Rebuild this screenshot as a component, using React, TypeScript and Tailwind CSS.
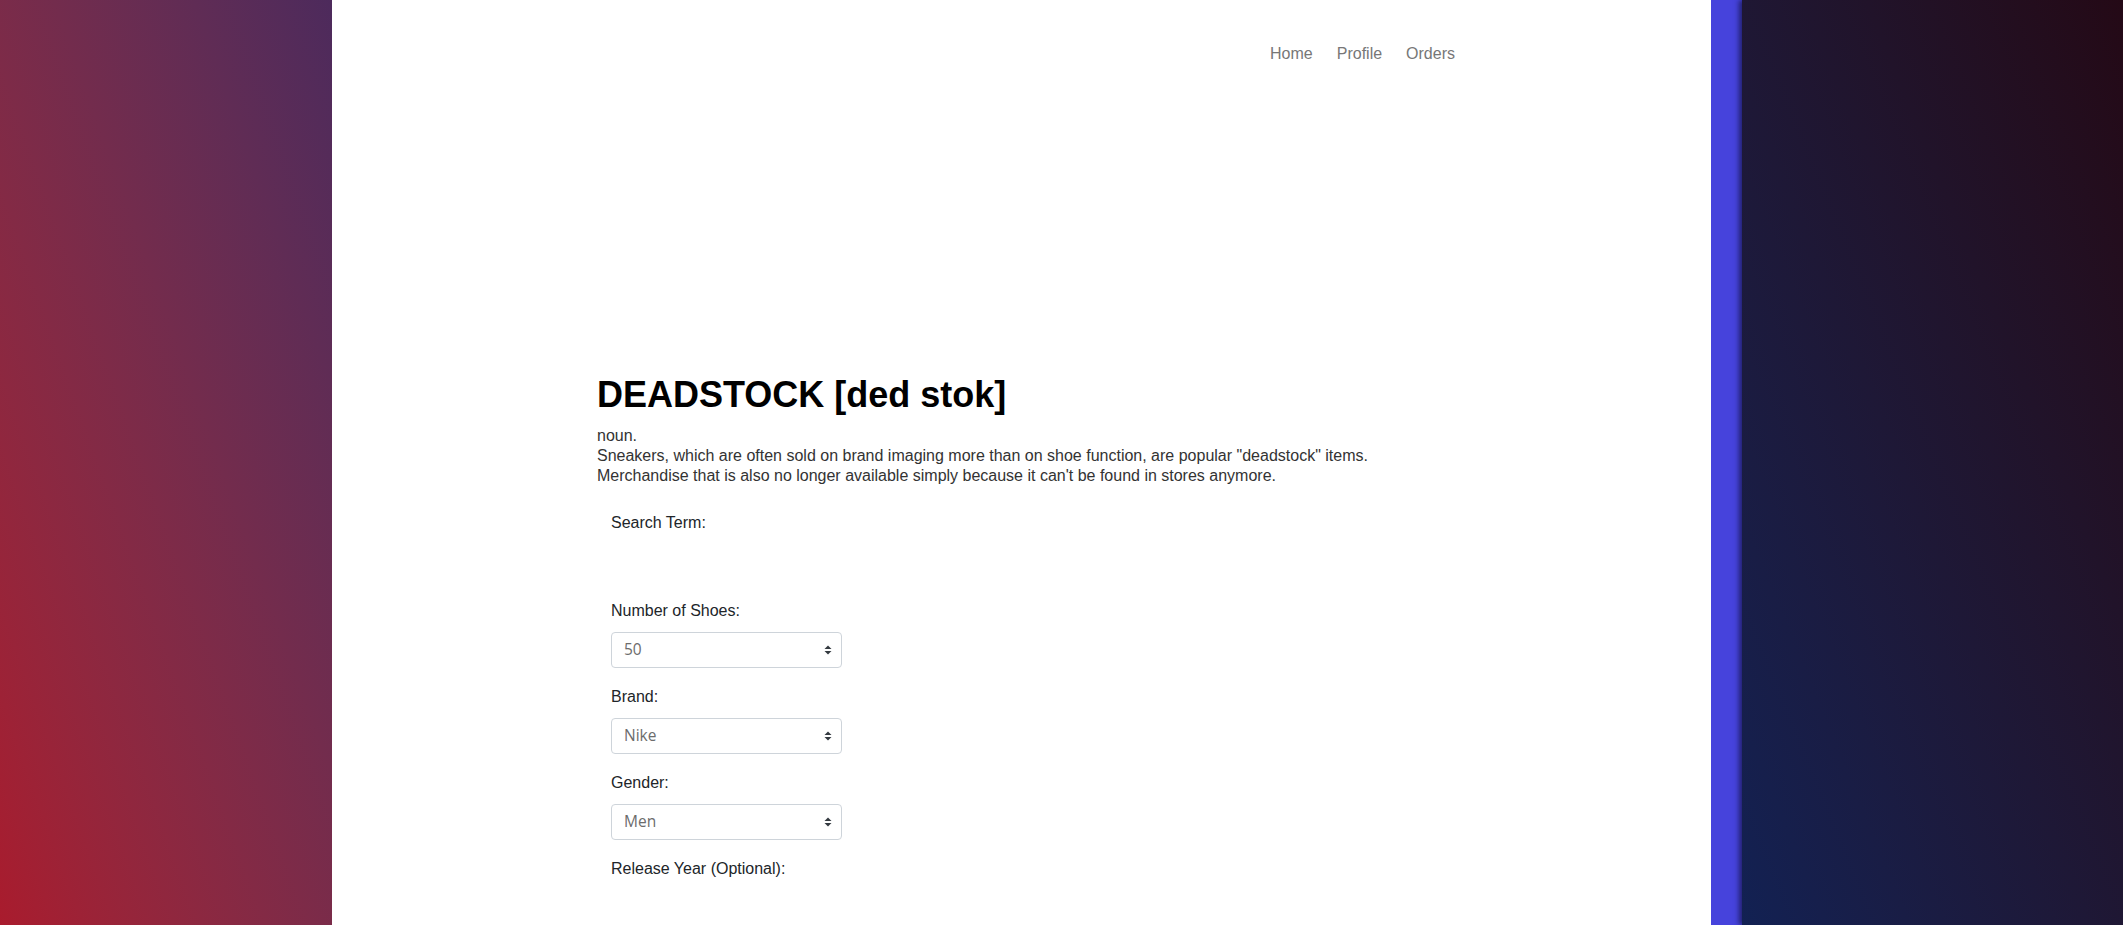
import { ReactNode } from "react";

const shoeCounts = ["50"];
const brands = ["Nike"];
const genders = ["Men"];

function SortArrows() {
  return (
    <svg width="8" height="10" viewBox="0 0 8 10" className="shrink-0">
      <path d="M4 0.5L7.5 4H0.5z" fill="#343a40" />
      <path d="M4 9.5L0.5 6H7.5z" fill="#343a40" />
    </svg>
  );
}

function Field({ label, children }: { label: string; children?: ReactNode }) {
  return (
    <div>
      <div className="h-[24px] leading-[24px] text-[16px] text-[#212529]">{label}</div>
      {children}
    </div>
  );
}

function FakeSelect({ value }: { value: string }) {
  return (
    <div className="mt-[9px] mb-[17px] flex h-[36px] w-[231px] items-center justify-between rounded-[4px] border border-[#ced4da] bg-white pl-[12px] pr-[9px]">
      <span className="font-['Open_Sans',sans-serif] text-[15.5px] text-[#6c6c6c]">{value}</span>
      <SortArrows />
    </div>
  );
}

export default function App() {
  return (
    <div className="flex h-[925px] w-full overflow-hidden font-['Liberation_Sans',Arial,sans-serif]">
      {/* left gradient */}
      <div className="w-[332px] shrink-0 bg-gradient-to-tr from-[#a91b2d] to-[#4d2a5c]" />

      {/* main white column */}
      <main className="flex-1 bg-white pl-[265px] pr-[256px]">
        <nav className="mt-[42px] flex h-[24px] items-center justify-end gap-[24px] text-[16px] text-[#777]">
          <a href="#">Home</a>
          <a href="#">Profile</a>
          <a href="#">Orders</a>
        </nav>

        <h1 className="mt-[311px] text-[36px] font-bold leading-[36px] text-black">
          DEADSTOCK [ded stok]
        </h1>

        <div className="mt-[13px] text-[16px] leading-[20px] text-[#333]">
          <p>noun.</p>
          <p>
            Sneakers, which are often sold on brand imaging more than on shoe function, are popular "deadstock" items.
          </p>
          <p>Merchandise that is also no longer available simply because it can't be found in stores anymore.</p>
        </div>

        <form className="mt-[25px] pl-[14px]">
          <Field label="Search Term:">
            <div className="h-[64px]" />
          </Field>
          <Field label="Number of Shoes:">
            {shoeCounts.map((n) => (
              <FakeSelect key={n} value={n} />
            ))}
          </Field>
          <Field label="Brand:">
            {brands.map((b) => (
              <FakeSelect key={b} value={b} />
            ))}
          </Field>
          <Field label="Gender:">
            {genders.map((g) => (
              <FakeSelect key={g} value={g} />
            ))}
          </Field>
          <Field label="Release Year (Optional):" />
        </form>
      </main>

      {/* right side: blue strip + dark gradient */}
      <div className="w-[31px] shrink-0 bg-[#4643dc]" />
      <div className="relative w-[381px] shrink-0 bg-gradient-to-tr from-[#122153] to-[#240916] shadow-[-3px_0_5px_rgba(10,10,40,0.6)]" />
    </div>
  );
}
